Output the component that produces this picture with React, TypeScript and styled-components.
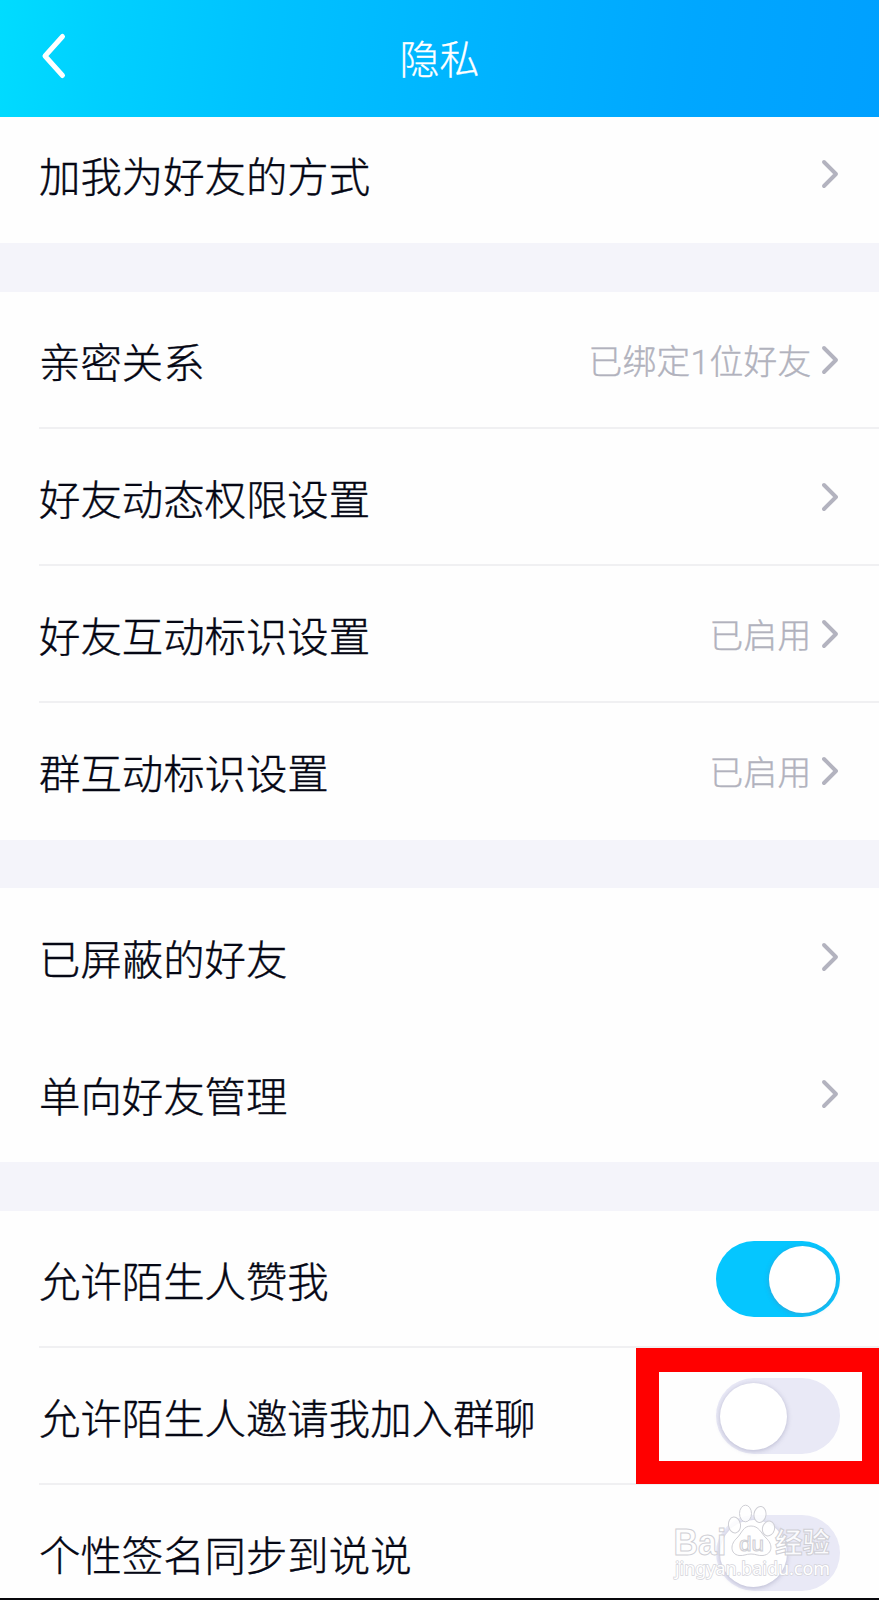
import React from "react";
import styled, { createGlobalStyle } from "styled-components";

const GlobalStyle = createGlobalStyle`
  * { box-sizing: border-box; }
  body {
    margin: 0;
    background: #f4f4fa;
    font-family: "Noto Sans CJK SC", "Noto Sans", sans-serif;
    font-weight: 300;
  }
`;

const Screen = styled.main`
  position: relative;
  display: flex;
  flex-direction: column;
  gap: 48.5px;
  width: 879px;
  height: 1600px;
  overflow: hidden;
  background: #f4f4fa;
  border-bottom: 2px solid #08080c;
`;

const Top = styled.div`
  flex: none;
  display: flex;
  flex-direction: column;
`;

const Header = styled.header`
  display: grid;
  grid-template-columns: 120px 1fr 120px;
  align-items: center;
  height: 117px;
  background: linear-gradient(97deg, #00dcff 0%, #00d0ff 12%, #00c2ff 30%, #00b5ff 52%, #00a7ff 78%, #00a0ff 100%);
`;

const BackButton = styled.button`
  display: flex;
  padding: 0 0 5px 38px;
  border: 0;
  background: none;
`;

const Title = styled.h1`
  margin: 0 0 4px;
  text-align: center;
  color: #fff;
  font-size: 40px;
  line-height: 60px;
  font-weight: 300;
  -webkit-text-stroke: 0.3px #fff;
`;

const Group = styled.section`
  flex: none;
  background: #fefefe;
`;

const Row = styled.div<{ $first?: boolean; $divided?: boolean }>`
  display: flex;
  align-items: center;
  height: ${(p) => (p.$first ? 126 : 137)}px;
  margin-left: 39px;
  padding-right: 39px;
  padding-bottom: ${(p) => (p.$first ? 12 : 0)}px;
  box-shadow: ${(p) => (p.$divided ? "inset 0 -2px #f0f0f2" : "none")};
`;

const Label = styled.span`
  flex: 1;
  color: #050714;
  font-size: 41.4px;
  line-height: 60px;
  white-space: nowrap;
  -webkit-text-stroke: 0.4px #050714;
`;

const Value = styled.span`
  margin-right: 8.5px;
  padding-top: 5px;
  color: #b1b2bd;
  font-family: Roboto, "Noto Sans CJK SC", sans-serif;
  font-size: 33.7px;
  line-height: 50px;
  letter-spacing: 0.3px;
  white-space: nowrap;
  -webkit-text-stroke: 0.4px #b1b2bd;
`;

const Track = styled.span<{ $on?: boolean }>`
  display: flex;
  align-items: center;
  justify-content: ${(p) => (p.$on ? "flex-end" : "flex-start")};
  width: 124px;
  height: 76px;
  padding: 0 4px;
  border-radius: 38px;
  background: ${(p) => (p.$on ? "#05c6ff" : "#e9e9f6")};
`;

const Knob = styled.span`
  width: 67px;
  height: 67px;
  border-radius: 50%;
  background: #fff;
  box-shadow: 0 1px 5px rgba(110, 110, 150, 0.4);
`;

const Highlight = styled.div`
  position: absolute;
  left: 636px;
  top: 1348px;
  width: 243px;
  height: 136px;
  border: solid #ff0000;
  border-width: 24px 17px 23px 23px;
`;

const Watermark = styled.svg`
  position: absolute;
  left: 664px;
  top: 1496px;
`;

const Chevron = () => (
  <svg width="20" height="32" viewBox="0 0 20 32" fill="none">
    <path d="M4 4 L16 16 L4 28" stroke="#b3b3bf" strokeWidth="3.9" strokeLinecap="round" strokeLinejoin="round" />
  </svg>
);

const Switch = ({ on }: { on?: boolean }) => (
  <Track $on={on} role="switch" aria-checked={!!on}>
    <Knob />
  </Track>
);

const LinkRow = (p: { label: string; value?: string; divided?: boolean; first?: boolean }) => (
  <Row $divided={p.divided} $first={p.first}>
    <Label>{p.label}</Label>
    {p.value && <Value>{p.value}</Value>}
    <Chevron />
  </Row>
);

export default function App() {
  return (
    <>
      <GlobalStyle />
      <Screen>
        <Top>
          <Header>
            <BackButton aria-label="返回">
              <svg width="32" height="52" viewBox="0 0 32 52" fill="none">
                <path d="M24.500 6.500 L7 26 L24.500 45.500" stroke="#fff" strokeWidth="5" strokeLinecap="round" strokeLinejoin="round" />
              </svg>
            </BackButton>
            <Title>隐私</Title>
          </Header>
          <Group>
            <LinkRow label="加我为好友的方式" first />
          </Group>
        </Top>
        <Group>
          <LinkRow label="亲密关系" value="已绑定1位好友" divided />
          <LinkRow label="好友动态权限设置" divided />
          <LinkRow label="好友互动标识设置" value="已启用" divided />
          <LinkRow label="群互动标识设置" value="已启用" />
        </Group>
        <Group>
          <LinkRow label="已屏蔽的好友" />
          <LinkRow label="单向好友管理" />
        </Group>
        <Group>
          <Row $divided>
            <Label>允许陌生人赞我</Label>
            <Switch on />
          </Row>
          <Row $divided>
            <Label>允许陌生人邀请我加入群聊</Label>
            <Switch />
          </Row>
          <Row>
            <Label>个性签名同步到说说</Label>
            <Switch />
          </Row>
        </Group>
        <Highlight />
        <Watermark width="180" height="96" viewBox="0 0 180 96">
          <g fill="#fff" fillOpacity="0.85" stroke="#cfcfd5" strokeWidth="1">
            <text x="9.500" y="59" fontSize="37" textLength="53" lengthAdjust="spacingAndGlyphs" fontFamily="Liberation Sans" fontWeight="700">Bai</text>
            <ellipse cx="70.500" cy="29" rx="6" ry="8" transform="rotate(-8 70.500 29)" />
            <ellipse cx="81.500" cy="17.500" rx="6" ry="8.300" />
            <ellipse cx="96" cy="18.500" rx="6" ry="8" transform="rotate(8 96 18.500)" />
            <ellipse cx="104.500" cy="32.500" rx="6" ry="7.500" transform="rotate(15 104.500 32.500)" />
            <path d="M87 30 C95 30 97 37 102 42 C109 48 109 58 99 59.500 C94 60 92 58 87 58 C82 58 80 60 75 59.500 C66 58 66 48 73 42 C78 37 79 30 87 30 Z" />
            <text x="75" y="54.500" fontSize="21" textLength="25" lengthAdjust="spacingAndGlyphs" fontFamily="Liberation Sans">du</text>
            <text x="111" y="56.500" fontSize="28" textLength="55" lengthAdjust="spacingAndGlyphs" fontFamily="Noto Sans CJK SC" fontWeight="700">经验</text>
          </g>
          <text x="11" y="79" fontSize="18.500" fill="#fff" stroke="#d4d4da" strokeWidth="1.500" paintOrder="stroke" textLength="155" lengthAdjust="spacingAndGlyphs" fontFamily="Noto Sans" fontWeight="400">jingyan.baidu.com</text>
        </Watermark>
      </Screen>
    </>
  );
}
